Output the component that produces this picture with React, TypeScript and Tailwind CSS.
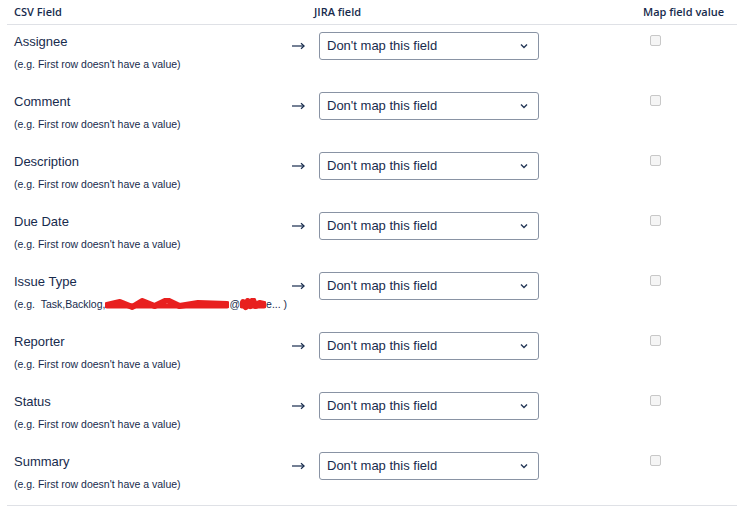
import React from "react";

const rows = [
  "Assignee",
  "Comment",
  "Description",
  "Due Date",
  "Issue Type",
  "Reporter",
  "Status",
  "Summary",
];

function Scribble({ width }: { width: number }) {
  return (
    <svg
      width={width}
      height="13"
      viewBox={`0 0 ${width} 13`}
      className="inline-block align-[-3px]"
    >
      <path
        d={`M2 7 L ${width * 0.12} 4 L ${width * 0.22} 9 L ${width * 0.3} 3 L ${width * 0.4} 8 L ${width * 0.5} 2 L ${width * 0.6} 8 L ${width * 0.75} 5 L ${width - 2} 6`}
        stroke="#e8201f"
        strokeWidth="6"
        strokeLinecap="round"
        strokeLinejoin="round"
        fill="none"
      />
      <path
        d={`M2 8 L ${width - 2} 8`}
        stroke="#e8201f"
        strokeWidth="5"
        strokeLinecap="round"
        fill="none"
      />
    </svg>
  );
}

function Chevron() {
  return (
    <svg width="8" height="6" viewBox="0 0 8 6" className="shrink-0">
      <path
        d="M1 1.5 L4 4.5 L7 1.5"
        stroke="#253858"
        strokeWidth="1.4"
        fill="none"
      />
    </svg>
  );
}

function Arrow() {
  return (
    <svg width="13" height="8" viewBox="0 0 13 8">
      <path d="M0 4 H12" stroke="#172b4d" strokeWidth="1.2" />
      <path d="M9 1.2 L12.2 4 L9 6.8" stroke="#172b4d" strokeWidth="1.2" fill="none" />
    </svg>
  );
}

function Row({ name }: { name: string }) {
  const issue = name === "Issue Type";
  return (
    <div className="grid grid-cols-[278px_27px_331px_94px] h-[60px]">
      <div className="pl-[7px] pt-[7px]">
        <div className="text-[13px] leading-[20px]">{name}</div>
        <div className="mt-[4px] text-[10.5px] leading-[16px] whitespace-nowrap">
          {issue ? (
            <>
              (e.g.&nbsp; Task,Backlog,
              <Scribble width={124} />
              @<Scribble width={26} />
              e... )
            </>
          ) : (
            "(e.g. First row doesn't have a value)"
          )}
        </div>
      </div>
      <div className="pt-[17px] pl-[7px]">
        <Arrow />
      </div>
      <div className="pt-[7px] pl-[7px]">
        <div className="w-[220px] h-[28px] border border-[#8993a4] rounded-[3px] bg-white flex items-center justify-between pl-[7px] pr-[10px]">
          <span className="text-[13px]">Don't map this field</span>
          <Chevron />
        </div>
      </div>
      <div className="pt-[10px] pl-[7px]">
        <div className="w-[11px] h-[11px] border border-[#c8c8c8] rounded-[2px] bg-[#f5f5f5]" />
      </div>
    </div>
  );
}

export default function App() {
  return (
    <div className="w-[744px] h-[519px] bg-white text-[#172b4d] font-['Liberation_Sans',sans-serif]">
      <div className="ml-[7px] w-[730px]">
        <div className="grid grid-cols-[278px_27px_331px_94px] h-[25px] border-b border-[#dfe1e6] text-[11px] font-semibold items-center font-['Open_Sans',sans-serif]">
          <div className="pl-[7px]">CSV Field</div>
          <div />
          <div className="pl-[2px]">JIRA field</div>
          <div className="whitespace-nowrap text-right pr-[16px]">Map field value</div>
        </div>
        <div className="border-b border-[#dfe1e6]">
          {rows.map((r) => (
            <Row key={r} name={r} />
          ))}
        </div>
      </div>
    </div>
  );
}
